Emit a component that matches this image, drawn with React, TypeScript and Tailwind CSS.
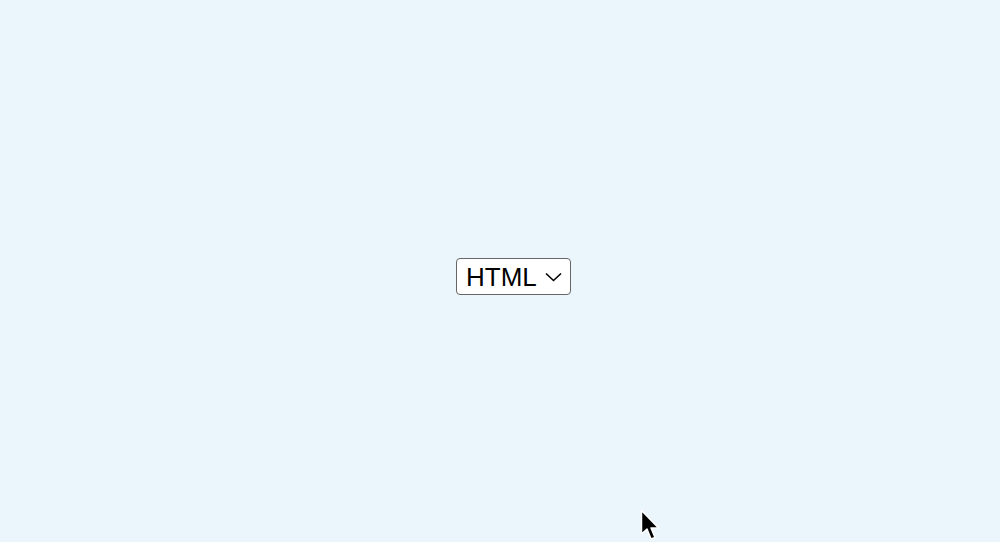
import React from "react";

export default function App() {
  return (
    <div className="relative w-[1000px] h-[542px] bg-[#eaf5fc] overflow-hidden" style={{ fontFamily: '"Liberation Sans", Arial, sans-serif' }}>
      <div className="flex h-full items-center justify-center pl-[27px] pt-[11px]">
        <div className="flex items-center w-[115px] h-[37px] bg-white border-[1.5px] border-[#666666] rounded-[4px] pl-[9px] pr-[7px]">
          <span className="text-[26px] leading-none text-black">HTML</span>
          <svg className="ml-[8px]" width="17" height="10" viewBox="0 0 17 10" fill="none">
            <path d="M1 1.5 L8.5 8.5 L16 1.5" stroke="#000" strokeWidth="1.6" />
          </svg>
        </div>
      </div>
      <svg className="absolute left-[640px] top-[509px]" width="22" height="33" viewBox="0 0 22 33">
        <path d="M1.5 1.5 L1.5 25 L7 20 L11 30 L15 28.5 L11 19 L18.5 19 Z" fill="#000" stroke="#fff" strokeWidth="1.5" strokeLinejoin="round" />
      </svg>
    </div>
  );
}
